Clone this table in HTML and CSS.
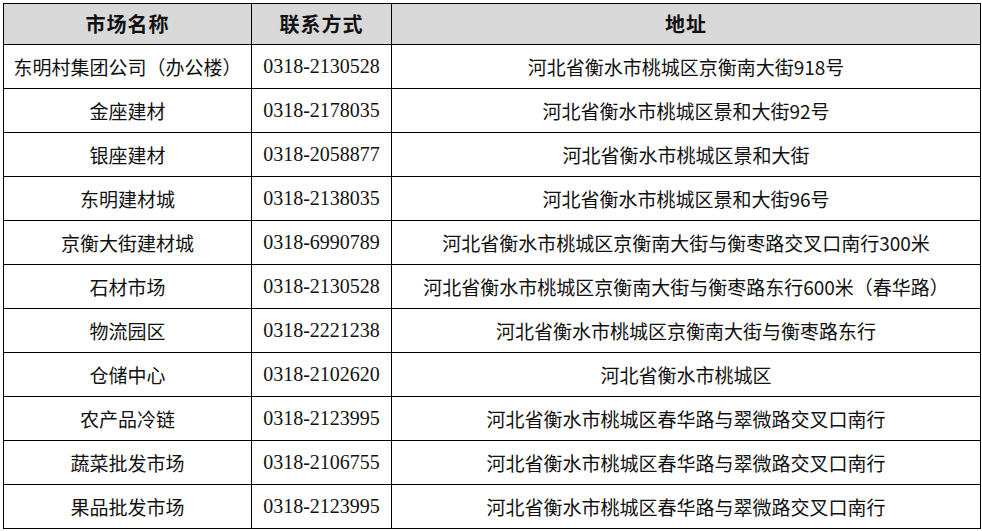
FILE: index.html
```html
<!DOCTYPE html>
<html lang="zh-CN">
<head>
<meta charset="utf-8">
<title>市场联系方式</title>
<link rel="stylesheet" href="styles.css">
</head>
<body>
<table class="market-table">
  <colgroup>
    <col class="col-name">
    <col class="col-phone">
    <col class="col-addr">
  </colgroup>
  <thead>
    <tr><th>市场名称</th><th>联系方式</th><th>地址</th></tr>
  </thead>
  <tbody>
    <tr><td>东明村集团公司（办公楼）</td><td class="phone">0318-2130528</td><td>河北省衡水市桃城区京衡南大街918号</td></tr>
    <tr><td>金座建材</td><td class="phone">0318-2178035</td><td>河北省衡水市桃城区景和大街92号</td></tr>
    <tr><td>银座建材</td><td class="phone">0318-2058877</td><td>河北省衡水市桃城区景和大街</td></tr>
    <tr><td>东明建材城</td><td class="phone">0318-2138035</td><td>河北省衡水市桃城区景和大街96号</td></tr>
    <tr><td>京衡大街建材城</td><td class="phone">0318-6990789</td><td>河北省衡水市桃城区京衡南大街与衡枣路交叉口南行300米</td></tr>
    <tr><td>石材市场</td><td class="phone">0318-2130528</td><td>河北省衡水市桃城区京衡南大街与衡枣路东行600米（春华路）</td></tr>
    <tr><td>物流园区</td><td class="phone">0318-2221238</td><td>河北省衡水市桃城区京衡南大街与衡枣路东行</td></tr>
    <tr><td>仓储中心</td><td class="phone">0318-2102620</td><td>河北省衡水市桃城区</td></tr>
    <tr><td>农产品冷链</td><td class="phone">0318-2123995</td><td>河北省衡水市桃城区春华路与翠微路交叉口南行</td></tr>
    <tr><td>蔬菜批发市场</td><td class="phone">0318-2106755</td><td>河北省衡水市桃城区春华路与翠微路交叉口南行</td></tr>
    <tr><td>果品批发市场</td><td class="phone">0318-2123995</td><td>河北省衡水市桃城区春华路与翠微路交叉口南行</td></tr>
  </tbody>
</table>
</body>
</html>
```
FILE: styles.css
```css
html, body {
  margin: 0;
  padding: 0;
  background: #ffffff;
}
body {
  padding: 3px 0 0 3px;
  font-family: "Noto Sans CJK SC", "Noto Sans", sans-serif;
  color: #111111;
}
.market-table {
  border-collapse: collapse;
  table-layout: fixed;
  width: 977px;
}
.col-name { width: 248px; }
.col-phone { width: 140px; }
.col-addr { width: 589px; }
.market-table th,
.market-table td {
  border: 1px solid #000000;
  text-align: center;
  vertical-align: middle;
  padding: 0;
  white-space: nowrap;
  overflow: hidden;
}
.market-table th {
  height: 40px;
  background: #d9d9d9;
  font-size: 20px;
  font-weight: 700;
  letter-spacing: 1px;
  line-height: 40px;
}
.market-table td {
  height: 43px;
  font-size: 19px;
  line-height: 43px;
}
.market-table td.phone {
  font-family: "Liberation Serif", "Noto Sans CJK SC", serif;
  font-size: 20px;
}
```
